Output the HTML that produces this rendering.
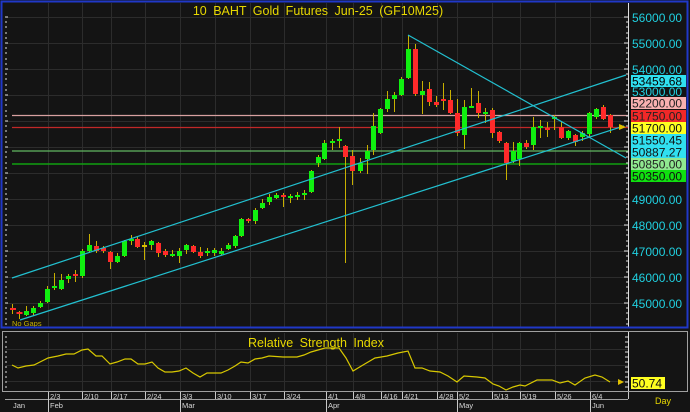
<!DOCTYPE html>
<html><head><meta charset="utf-8"><style>
html,body{margin:0;padding:0;background:#141414;width:690px;height:412px;overflow:hidden}
svg{display:block;font-family:"Liberation Sans",sans-serif}
</style></head><body>
<svg width="690" height="412" viewBox="0 0 690 412" xmlns="http://www.w3.org/2000/svg">
<rect width="690" height="412" fill="#141414"/>
<!-- grid -->
<g stroke="#2c2c2c" stroke-width="1">
<line x1="6" y1="17.5" x2="628" y2="17.5"/><line x1="6" y1="43.5" x2="628" y2="43.5"/><line x1="6" y1="69.5" x2="628" y2="69.5"/><line x1="6" y1="95.5" x2="628" y2="95.5"/><line x1="6" y1="121.5" x2="628" y2="121.5"/><line x1="6" y1="147.5" x2="628" y2="147.5"/><line x1="6" y1="173.5" x2="628" y2="173.5"/><line x1="6" y1="199.5" x2="628" y2="199.5"/><line x1="6" y1="225.5" x2="628" y2="225.5"/><line x1="6" y1="251.5" x2="628" y2="251.5"/><line x1="6" y1="277.5" x2="628" y2="277.5"/><line x1="6" y1="303.5" x2="628" y2="303.5"/>
<g id="vg">
<line x1="48.5" y1="3" x2="48.5" y2="327"/><line x1="82.5" y1="3" x2="82.5" y2="327"/><line x1="111.5" y1="3" x2="111.5" y2="327"/><line x1="145.5" y1="3" x2="145.5" y2="327"/><line x1="180.5" y1="3" x2="180.5" y2="327"/><line x1="215.5" y1="3" x2="215.5" y2="327"/><line x1="250.5" y1="3" x2="250.5" y2="327"/><line x1="284.5" y1="3" x2="284.5" y2="327"/><line x1="326.5" y1="3" x2="326.5" y2="327"/><line x1="353.5" y1="3" x2="353.5" y2="327"/><line x1="381.5" y1="3" x2="381.5" y2="327"/><line x1="402.5" y1="3" x2="402.5" y2="327"/><line x1="437.5" y1="3" x2="437.5" y2="327"/><line x1="457.5" y1="3" x2="457.5" y2="327"/><line x1="492.5" y1="3" x2="492.5" y2="327"/><line x1="520.5" y1="3" x2="520.5" y2="327"/><line x1="555.5" y1="3" x2="555.5" y2="327"/><line x1="590.5" y1="3" x2="590.5" y2="327"/>
</g>
<g transform="translate(0,331)">
<line x1="48.5" y1="2" x2="48.5" y2="60"/><line x1="82.5" y1="2" x2="82.5" y2="60"/><line x1="111.5" y1="2" x2="111.5" y2="60"/><line x1="145.5" y1="2" x2="145.5" y2="60"/><line x1="180.5" y1="2" x2="180.5" y2="60"/><line x1="215.5" y1="2" x2="215.5" y2="60"/><line x1="250.5" y1="2" x2="250.5" y2="60"/><line x1="284.5" y1="2" x2="284.5" y2="60"/><line x1="326.5" y1="2" x2="326.5" y2="60"/><line x1="353.5" y1="2" x2="353.5" y2="60"/><line x1="381.5" y1="2" x2="381.5" y2="60"/><line x1="402.5" y1="2" x2="402.5" y2="60"/><line x1="437.5" y1="2" x2="437.5" y2="60"/><line x1="457.5" y1="2" x2="457.5" y2="60"/><line x1="492.5" y1="2" x2="492.5" y2="60"/><line x1="520.5" y1="2" x2="520.5" y2="60"/><line x1="555.5" y1="2" x2="555.5" y2="60"/><line x1="590.5" y1="2" x2="590.5" y2="60"/>
<line x1="6" y1="18.5" x2="628" y2="18.5"/><line x1="6" y1="34.5" x2="628" y2="34.5"/><line x1="6" y1="50.5" x2="628" y2="50.5"/>
</g>
</g>
<!-- horizontal levels -->
<line x1="12" y1="115.5" x2="628" y2="115.5" stroke="#d8a0a0" stroke-width="1.3"/>
<line x1="12" y1="127.5" x2="628" y2="127.5" stroke="#c02828" stroke-width="1.3"/>
<line x1="12" y1="151" x2="628" y2="151" stroke="#60b860" stroke-width="1.3"/>
<line x1="12" y1="164" x2="628" y2="164" stroke="#10a010" stroke-width="1.5"/>
<!-- candles -->
<g stroke="#c8b000" stroke-width="1">
<line x1="12.5" y1="304" x2="12.5" y2="314"/><line x1="19.5" y1="311" x2="19.5" y2="319"/><line x1="26.5" y1="306" x2="26.5" y2="316"/><line x1="33.5" y1="306" x2="33.5" y2="316"/><line x1="40.5" y1="301" x2="40.5" y2="308"/><line x1="47.5" y1="286" x2="47.5" y2="303"/><line x1="54.5" y1="273" x2="54.5" y2="290"/><line x1="61.5" y1="274" x2="61.5" y2="290"/><line x1="68.5" y1="274" x2="68.5" y2="283"/><line x1="75.5" y1="270" x2="75.5" y2="282"/><line x1="82.5" y1="249" x2="82.5" y2="278"/><line x1="89.5" y1="234" x2="89.5" y2="253"/><line x1="96.5" y1="241" x2="96.5" y2="253"/><line x1="103.5" y1="246" x2="103.5" y2="253"/><line x1="110.5" y1="251" x2="110.5" y2="269"/><line x1="117.5" y1="253" x2="117.5" y2="263"/><line x1="124.5" y1="240" x2="124.5" y2="257"/><line x1="131.5" y1="235" x2="131.5" y2="245"/><line x1="137.5" y1="237" x2="137.5" y2="248"/><line x1="144.5" y1="242" x2="144.5" y2="260"/><line x1="151.5" y1="240" x2="151.5" y2="250"/><line x1="158.5" y1="242" x2="158.5" y2="257"/><line x1="165.5" y1="249" x2="165.5" y2="257"/><line x1="172.5" y1="250" x2="172.5" y2="257"/><line x1="179.5" y1="248" x2="179.5" y2="263"/><line x1="186.5" y1="244" x2="186.5" y2="254"/><line x1="193.5" y1="245" x2="193.5" y2="253"/><line x1="200.5" y1="247" x2="200.5" y2="258"/><line x1="207.5" y1="248" x2="207.5" y2="256"/><line x1="214.5" y1="248" x2="214.5" y2="256"/><line x1="221.5" y1="248" x2="221.5" y2="255"/><line x1="228.5" y1="243" x2="228.5" y2="250"/><line x1="235.5" y1="235" x2="235.5" y2="248"/><line x1="241.5" y1="218" x2="241.5" y2="237"/><line x1="248.5" y1="218" x2="248.5" y2="223"/><line x1="255.5" y1="208" x2="255.5" y2="224"/><line x1="262.5" y1="199" x2="262.5" y2="209"/><line x1="269.5" y1="194" x2="269.5" y2="205"/><line x1="276.5" y1="193" x2="276.5" y2="199"/><line x1="283.5" y1="193" x2="283.5" y2="207"/><line x1="290.5" y1="194" x2="290.5" y2="203"/><line x1="297.5" y1="192" x2="297.5" y2="200"/><line x1="304.5" y1="190" x2="304.5" y2="200"/><line x1="311.5" y1="170" x2="311.5" y2="193"/><line x1="318.5" y1="155" x2="318.5" y2="167"/><line x1="324.5" y1="140" x2="324.5" y2="160"/><line x1="332.5" y1="139" x2="332.5" y2="150"/><line x1="339.5" y1="127" x2="339.5" y2="148"/><line x1="345.5" y1="145" x2="345.5" y2="263"/><line x1="352.5" y1="150" x2="352.5" y2="185"/><line x1="360.5" y1="158" x2="360.5" y2="173"/><line x1="367.5" y1="145" x2="367.5" y2="174"/><line x1="373.5" y1="113" x2="373.5" y2="155"/><line x1="380.5" y1="108" x2="380.5" y2="134"/><line x1="387.5" y1="91" x2="387.5" y2="112"/><line x1="394.5" y1="92" x2="394.5" y2="112"/><line x1="401.5" y1="77" x2="401.5" y2="96"/><line x1="408.5" y1="35" x2="408.5" y2="79"/><line x1="415.5" y1="44" x2="415.5" y2="96"/><line x1="422.5" y1="81" x2="422.5" y2="114"/><line x1="429.5" y1="82" x2="429.5" y2="106"/><line x1="436.5" y1="96" x2="436.5" y2="107"/><line x1="443.5" y1="83" x2="443.5" y2="110"/><line x1="450.5" y1="90" x2="450.5" y2="114"/><line x1="457.5" y1="99" x2="457.5" y2="136"/><line x1="464.5" y1="100" x2="464.5" y2="149"/><line x1="471.5" y1="88" x2="471.5" y2="108"/><line x1="478.5" y1="91" x2="478.5" y2="118"/><line x1="485.5" y1="108" x2="485.5" y2="123"/><line x1="492.5" y1="108" x2="492.5" y2="138"/><line x1="499.5" y1="131" x2="499.5" y2="143"/><line x1="506.5" y1="142" x2="506.5" y2="180"/><line x1="513.5" y1="142" x2="513.5" y2="163"/><line x1="519.5" y1="142" x2="519.5" y2="166"/><line x1="526.5" y1="140" x2="526.5" y2="149"/><line x1="533.5" y1="117" x2="533.5" y2="150"/><line x1="540.5" y1="120" x2="540.5" y2="138"/><line x1="547.5" y1="122" x2="547.5" y2="137"/><line x1="554.5" y1="115" x2="554.5" y2="130"/><line x1="561.5" y1="121" x2="561.5" y2="139"/><line x1="568.5" y1="130" x2="568.5" y2="140"/><line x1="575.5" y1="134" x2="575.5" y2="146"/><line x1="582.5" y1="131" x2="582.5" y2="141"/><line x1="589.5" y1="112" x2="589.5" y2="138"/><line x1="596.5" y1="108" x2="596.5" y2="119"/><line x1="603.5" y1="105" x2="603.5" y2="120"/><line x1="610.5" y1="114" x2="610.5" y2="133"/>
</g>
<g fill="#ff2a2a">
<rect x="10" y="308" width="6" height="2"/><rect x="16.5" y="312" width="6" height="2"/><rect x="73" y="274" width="5" height="2"/><rect x="94" y="246" width="5" height="5"/><rect x="101" y="248" width="5" height="3"/><rect x="108" y="252" width="5" height="10"/><rect x="135" y="239" width="5" height="8"/><rect x="142" y="245" width="5" height="2" fill="#d8c000"/><rect x="156" y="243" width="5" height="10"/><rect x="163" y="251" width="5" height="4"/><rect x="191" y="246" width="5" height="6"/><rect x="198" y="252" width="5" height="4"/><rect x="246" y="219" width="5" height="2"/><rect x="281" y="195" width="5" height="2"/><rect x="343" y="146" width="5" height="11"/><rect x="350" y="156" width="5" height="15"/><rect x="413" y="49" width="5" height="45"/><rect x="427" y="89" width="5" height="13"/><rect x="434" y="102" width="5" height="3"/><rect x="441" y="99" width="5" height="2"/><rect x="448" y="100" width="5" height="13"/><rect x="455" y="113" width="5" height="20"/><rect x="476" y="103" width="5" height="10"/><rect x="490" y="110" width="5" height="23"/><rect x="497" y="132" width="5" height="9"/><rect x="504" y="143" width="5" height="20"/><rect x="524" y="143" width="5" height="4"/><rect x="545" y="128" width="5" height="2"/><rect x="559" y="127" width="5" height="11"/><rect x="573" y="135" width="5" height="7"/><rect x="601" y="107" width="5" height="12"/><rect x="608" y="115" width="5" height="12"/>
</g>
<g fill="#10f010">
<rect x="24" y="311" width="5" height="4"/><rect x="31" y="308" width="5" height="5"/><rect x="38" y="303" width="5" height="4"/><rect x="45" y="289" width="5" height="13"/><rect x="52" y="286" width="5" height="2"/><rect x="59" y="280" width="5" height="9"/><rect x="66" y="276" width="5" height="3"/><rect x="80" y="251" width="5" height="25"/><rect x="87" y="245" width="5" height="6"/><rect x="115" y="256" width="5" height="6"/><rect x="122" y="241" width="5" height="15"/><rect x="129" y="239" width="5" height="2"/><rect x="149" y="241" width="5" height="4"/><rect x="170" y="254" width="5" height="2"/><rect x="177" y="251" width="5" height="5"/><rect x="184" y="245" width="5" height="5"/><rect x="205" y="251" width="5" height="2"/><rect x="212" y="250" width="5" height="3"/><rect x="219" y="251" width="5" height="3"/><rect x="226" y="245" width="5" height="4"/><rect x="233" y="236" width="5" height="10"/><rect x="239" y="219" width="5" height="17"/><rect x="253" y="210" width="5" height="11"/><rect x="260" y="203" width="5" height="5"/><rect x="267" y="197" width="5" height="5"/><rect x="274" y="195" width="5" height="3"/><rect x="288" y="196" width="5" height="2"/><rect x="295" y="195" width="5" height="2"/><rect x="302" y="193" width="5" height="2"/><rect x="309" y="171" width="5" height="21"/><rect x="316" y="157" width="5" height="6"/><rect x="322" y="143" width="5" height="16"/><rect x="330" y="141" width="5" height="2"/><rect x="337" y="139" width="5" height="2"/><rect x="358" y="163" width="5" height="8"/><rect x="365" y="151" width="5" height="8"/><rect x="371" y="126" width="5" height="24"/><rect x="378" y="109" width="5" height="24"/><rect x="385" y="99" width="5" height="10"/><rect x="392" y="95" width="5" height="4"/><rect x="399" y="79" width="5" height="16"/><rect x="406" y="49" width="5" height="29"/><rect x="420" y="91" width="5" height="4"/><rect x="462" y="107" width="5" height="28"/><rect x="469" y="106" width="5" height="2"/><rect x="483" y="112" width="5" height="2"/><rect x="511" y="151" width="5" height="10"/><rect x="517" y="143" width="5" height="16"/><rect x="531" y="127" width="5" height="18"/><rect x="538" y="126" width="5" height="2"/><rect x="552" y="117" width="5" height="2"/><rect x="566" y="131" width="5" height="7"/><rect x="580" y="133" width="5" height="4"/><rect x="587" y="113" width="5" height="21"/><rect x="594" y="109" width="5" height="8"/>
</g>
<!-- trend lines -->
<g stroke="#22c0d0" stroke-width="1.2" fill="none">
<line x1="12" y1="278" x2="626" y2="75"/>
<line x1="20" y1="320" x2="624" y2="126"/>
<line x1="408" y1="35" x2="626" y2="158"/>
</g>
<path d="M619 124 L626 127 L619 130 Z" fill="#e0c000"/>
<text x="12" y="326" font-size="7.5" fill="#c8b000">No Gaps</text>
<text x="318" y="15" font-size="12.5" fill="#e8d800" text-anchor="middle" word-spacing="3">10 BAHT Gold Futures Jun-25 (GF10M25)</text>
<!-- left ticks -->
<path d="M5 17h3M5 22h2M5 27h2M5 33h2M5 38h2M5 43h3M5 48h2M5 53h2M5 59h2M5 64h2M5 69h3M5 74h2M5 79h2M5 85h2M5 90h2M5 95h3M5 100h2M5 105h2M5 111h2M5 116h2M5 121h3M5 126h2M5 131h2M5 137h2M5 142h2M5 147h3M5 152h2M5 157h2M5 163h2M5 168h2M5 173h3M5 178h2M5 183h2M5 189h2M5 194h2M5 199h3M5 204h2M5 209h2M5 215h2M5 220h2M5 225h3M5 230h2M5 235h2M5 241h2M5 246h2M5 251h3M5 256h2M5 261h2M5 267h2M5 272h2M5 277h3M5 282h2M5 287h2M5 293h2M5 298h2M5 303h3M5 308h2M5 313h2M5 319h2M5 324h2" stroke="#e0e0e0" stroke-width="1"/>
<!-- right axis -->
<line x1="628.5" y1="3" x2="628.5" y2="327" stroke="#e0e0e0"/>
<path d="M624 17h4M626 22h2M626 27h2M626 33h2M626 38h2M624 43h4M626 48h2M626 53h2M626 59h2M626 64h2M624 69h4M626 74h2M626 79h2M626 85h2M626 90h2M624 95h4M626 100h2M626 105h2M626 111h2M626 116h2M624 121h4M626 126h2M626 131h2M626 137h2M626 142h2M624 147h4M626 152h2M626 157h2M626 163h2M626 168h2M624 173h4M626 178h2M626 183h2M626 189h2M626 194h2M624 199h4M626 204h2M626 209h2M626 215h2M626 220h2M624 225h4M626 230h2M626 235h2M626 241h2M626 246h2M624 251h4M626 256h2M626 261h2M626 267h2M626 272h2M624 277h4M626 282h2M626 287h2M626 293h2M626 298h2M624 303h4M626 308h2M626 313h2M626 319h2M626 324h2" stroke="#e0e0e0"/>
<g font-size="12" fill="#20d0e0">
<text x="632" y="22">56000.00</text><text x="632" y="48">55000.00</text><text x="632" y="74">54000.00</text><text x="632" y="96">53000.00</text><text x="632" y="204">49000.00</text><text x="632" y="230">48000.00</text><text x="632" y="256">47000.00</text><text x="632" y="282">46000.00</text><text x="632" y="308">45000.00</text>
</g>
<g font-size="12">
<rect x="631" y="75" width="55" height="12" fill="#30e0f0"/><text x="632" y="85.5" fill="#000">53459.68</text>
<rect x="631" y="97" width="55" height="12" fill="#f8b0b0"/><text x="632" y="107.5" fill="#222">52200.00</text>
<rect x="631" y="110" width="55" height="12" fill="#f02828"/><text x="632" y="120.5" fill="#222">51750.00</text>
<rect x="631" y="122" width="55" height="12" fill="#ffff20"/><text x="632" y="132.5" fill="#111">51700.00</text>
<rect x="631" y="134" width="55" height="12" fill="#30e0f0"/><text x="632" y="144.5" fill="#111">51550.45</text>
<rect x="631" y="146" width="55" height="12" fill="#30e0f0"/><text x="632" y="156.5" fill="#111">50887.27</text>
<rect x="631" y="158" width="55" height="12" fill="#90e890"/><text x="632" y="168.5" fill="#222">50850.00</text>
<rect x="631" y="170" width="55" height="12" fill="#10e010"/><text x="632" y="180.5" fill="#111">50350.00</text>
</g>
<!-- main border -->
<rect x="1.5" y="1.5" width="686" height="326" fill="none" stroke="#2038c8" stroke-width="2"/>
<!-- RSI panel -->
<rect x="2.5" y="331.5" width="685" height="60" fill="none" stroke="#a0a0a0"/>
<line x1="628.5" y1="332" x2="628.5" y2="391" stroke="#e0e0e0"/>
<path d="M5 337h2M5 342h2M5 347h2M5 352h2M5 357h2M5 362h2M5 367h2M5 372h2M5 377h2M5 382h2M5 387h2M625 337h3M625 342h3M625 347h3M625 352h3M625 357h3M625 362h3M625 367h3M625 372h3M625 377h3M625 382h3M625 387h3" stroke="#e0e0e0"/>
<text x="316" y="347" font-size="12.5" fill="#e8d800" text-anchor="middle" word-spacing="3">Relative Strength Index</text>
<polyline fill="none" stroke="#d8c800" stroke-width="1.2" points="12,365 18,368 26,366 34,365 40,362 48,358 58,356 66,354 74,354 82,350 88,349 96,356 102,356 110,364 117,362 125,359 131,359 138,364 145,364 152,362 158,368 165,372 172,372 179,371 186,368 193,373 200,377 207,373 221,373 228,370 235,366 241,362 248,363 255,359 262,358 269,356 283,357 290,357 297,357 304,355 311,352 318,350 325,348 339,348 346,358 353,371 363,365 375,358 387,356 398,353 408,351 415,368 422,368 430,371 440,372 448,376 457,382 464,376 477,377 485,378 493,384 499,386 506,390 513,387 520,385 525,386 537,380 552,380 560,383 568,381 575,385 585,378 595,375 602,377 610,382"/>
<path d="M618 379 L624 382 L618 385 Z" fill="#e0c000"/>
<rect x="631" y="377" width="34" height="12" fill="#ffff20"/><text x="632" y="387.5" font-size="12" fill="#111">50.74</text>
<!-- date axis -->
<line x1="5" y1="399.5" x2="628" y2="399.5" stroke="#a0a0a0"/>
<g stroke="#c8c8c8">
<line x1="48.5" y1="392" x2="48.5" y2="412"/><line x1="82.5" y1="392" x2="82.5" y2="399"/><line x1="111.5" y1="392" x2="111.5" y2="399"/><line x1="145.5" y1="392" x2="145.5" y2="399"/><line x1="180.5" y1="392" x2="180.5" y2="412"/><line x1="215.5" y1="392" x2="215.5" y2="399"/><line x1="250.5" y1="392" x2="250.5" y2="399"/><line x1="284.5" y1="392" x2="284.5" y2="399"/><line x1="326.5" y1="392" x2="326.5" y2="412"/><line x1="353.5" y1="392" x2="353.5" y2="399"/><line x1="381.5" y1="392" x2="381.5" y2="399"/><line x1="402.5" y1="392" x2="402.5" y2="399"/><line x1="437.5" y1="392" x2="437.5" y2="399"/><line x1="457.5" y1="392" x2="457.5" y2="412"/><line x1="492.5" y1="392" x2="492.5" y2="399"/><line x1="520.5" y1="392" x2="520.5" y2="399"/><line x1="555.5" y1="392" x2="555.5" y2="399"/><line x1="590.5" y1="392" x2="590.5" y2="412"/><line x1="628.5" y1="392" x2="628.5" y2="399"/>
</g>
<g font-size="7.5" fill="#d8d8d8">
<text x="50" y="399">2/3</text><text x="84" y="399">2/10</text><text x="113" y="399">2/17</text><text x="147" y="399">2/24</text><text x="182" y="399">3/3</text><text x="217" y="399">3/10</text><text x="252" y="399">3/17</text><text x="286" y="399">3/24</text><text x="328" y="399">4/1</text><text x="355" y="399">4/8</text><text x="383" y="399">4/16</text><text x="404" y="399">4/21</text><text x="439" y="399">4/28</text><text x="459" y="399">5/2</text><text x="494" y="399">5/13</text><text x="522" y="399">5/19</text><text x="557" y="399">5/26</text><text x="592" y="399">6/4</text>
<text x="13" y="408">Jan</text><text x="50" y="408">Feb</text><text x="182" y="408">Mar</text><text x="328" y="408">Apr</text><text x="459" y="408">May</text><text x="592" y="408">Jun</text>
</g>
<text x="655" y="404" font-size="9" fill="#e8d800">Day</text>
</svg>
</body></html>
